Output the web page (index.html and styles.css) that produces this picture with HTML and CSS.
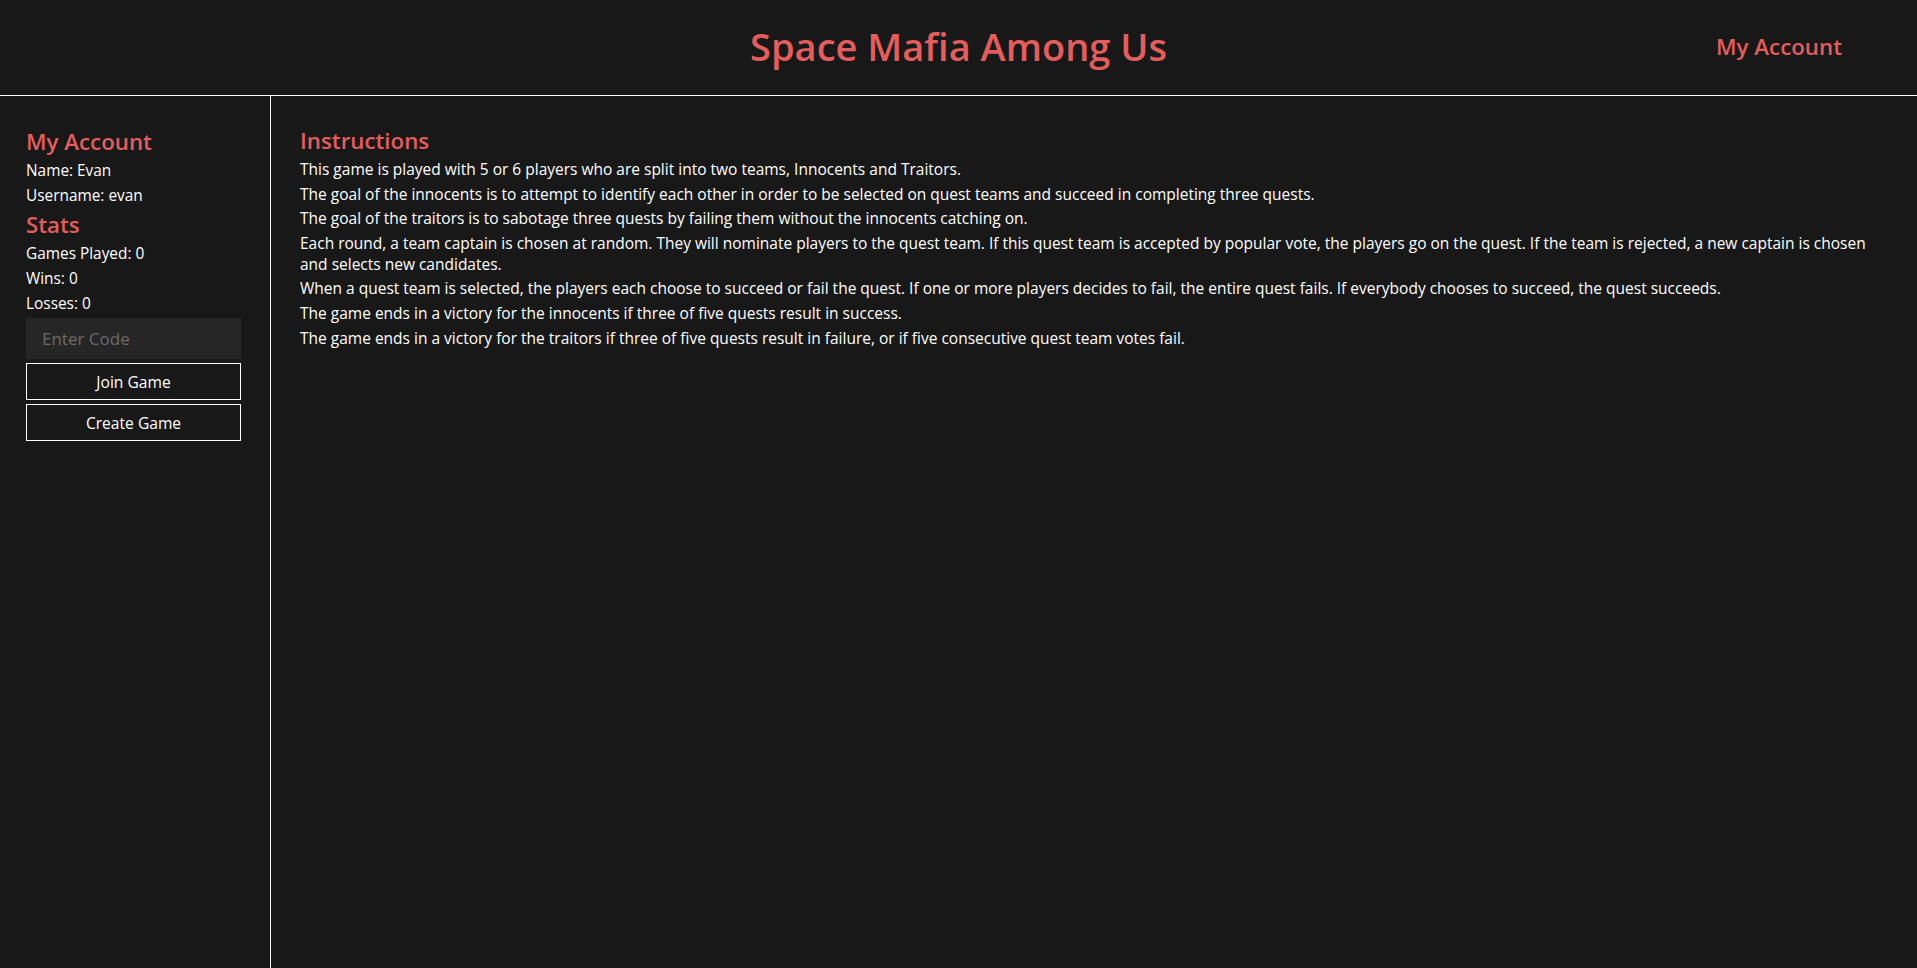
FILE: index.html
```html
<!DOCTYPE html>
<html lang="en">
<head>
<meta charset="utf-8">
<title>Space Mafia Among Us</title>
<link rel="stylesheet" href="styles.css">
</head>
<body>
<header class="topbar">
  <div class="topbar-spacer"></div>
  <h1 class="site-title">Space Mafia Among Us</h1>
  <a class="topbar-link" href="#">My Account</a>
</header>
<div class="layout">
  <aside class="sidebar">
    <h2 class="section-title">My Account</h2>
    <p class="info">Name: Evan</p>
    <p class="info">Username: evan</p>
    <h2 class="section-title">Stats</h2>
    <p class="info">Games Played: 0</p>
    <p class="info">Wins: 0</p>
    <p class="info">Losses: 0</p>
    <input class="code-input" type="text" placeholder="Enter Code">
    <button class="action-btn">Join Game</button>
    <button class="action-btn">Create Game</button>
  </aside>
  <main class="content">
    <h2 class="section-title">Instructions</h2>
    <p class="rule">This game is played with 5 or 6 players who are split into two teams, Innocents and Traitors.</p>
    <p class="rule">The goal of the innocents is to attempt to identify each other in order to be selected on quest teams and succeed in completing three quests.</p>
    <p class="rule">The goal of the traitors is to sabotage three quests by failing them without the innocents catching on.</p>
    <p class="rule">Each round, a team captain is chosen at random. They will nominate players to the quest team. If this quest team is accepted by popular vote, the players go on the quest. If the team is rejected, a new captain is chosen and selects new candidates.</p>
    <p class="rule">When a quest team is selected, the players each choose to succeed or fail the quest. If one or more players decides to fail, the entire quest fails. If everybody chooses to succeed, the quest succeeds.</p>
    <p class="rule">The game ends in a victory for the innocents if three of five quests result in success.</p>
    <p class="rule">The game ends in a victory for the traitors if three of five quests result in failure, or if five consecutive quest team votes fail.</p>
  </main>
</div>
</body>
</html>
```
FILE: styles.css
```css
* { box-sizing: border-box; }
html, body { margin: 0; padding: 0; }
body {
  background: #181818;
  color: #ffffff;
  font-family: "Open Sans", "Liberation Sans", sans-serif;
  min-height: 100vh;
}
.topbar {
  display: grid;
  grid-template-columns: 1fr auto 1fr;
  align-items: center;
  height: 96px;
  padding-bottom: 3px;
  border-bottom: 1px solid #ffffff;
}
.site-title {
  margin: 0 0 1px;
  font-size: 38px;
  font-weight: 600;
  color: #e35d5d;
}
.topbar-link {
  justify-self: end;
  padding-right: 75px;
  font-size: 22.3px;
  font-weight: 600;
  color: #e35d5d;
  text-decoration: none;
}
.layout {
  display: grid;
  grid-template-columns: 271px 1fr;
  min-height: calc(100vh - 96px);
}
.sidebar {
  border-right: 1px solid #ffffff;
  padding: 31px 29px 0 26px;
  display: flex;
  flex-direction: column;
}
.content { padding: 30px 50px 0 29px; }
.section-title {
  margin: 0 0 4px;
  font-size: 22.3px;
  line-height: 29px;
  font-weight: 600;
  color: #e35d5d;
}
.info, .rule {
  margin: 0 0 4px;
  font-size: 15.4px;
  line-height: 21px;
}
.rule {
  margin-bottom: 3.6px;
  font-size: 15.5px;
}
.code-input {
  height: 41px;
  border: none;
  background: #262626;
  padding: 0 16px;
  font: inherit;
  font-size: 17px;
  color: #fff;
  outline: none;
}
.code-input::placeholder { color: #6a6a6a; }
.action-btn {
  height: 37px;
  margin-top: 4px;
  background: #181818;
  border: 1px solid #ffffff;
  color: #fff;
  font: inherit;
  font-size: 15.6px;
  padding: 0;
}
```
